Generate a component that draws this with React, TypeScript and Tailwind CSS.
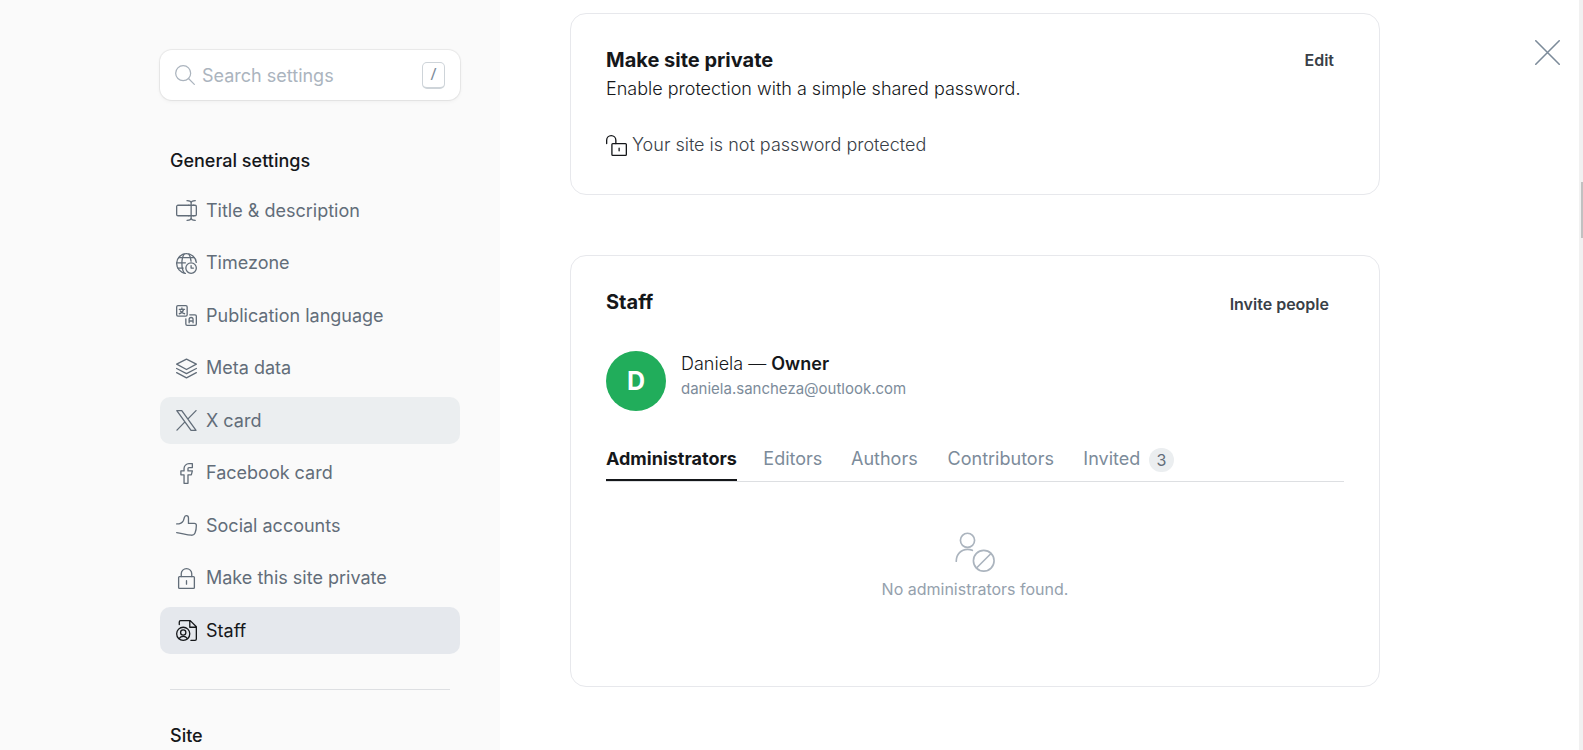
import { useState, type ReactNode } from 'react';

type IconProps = { className?: string; children: ReactNode };

function Icon({ className = 'size-[21px]', children }: IconProps) {
  return (
    <svg
      viewBox="0 0 24 24"
      fill="none"
      stroke="currentColor"
      strokeWidth="1.5"
      strokeLinecap="round"
      strokeLinejoin="round"
      aria-hidden="true"
      className={`shrink-0 ${className}`}
    >
      {children}
    </svg>
  );
}

const navItems: { label: string; icon: ReactNode }[] = [
  {
    label: 'Title & description',
    icon: (
      <>
        <path d="M14.6 18H2.25A1.5 1.5 0 0 1 .75 16.5v-9A1.5 1.5 0 0 1 2.25 6H14.6M20 6h1.75a1.5 1.5 0 0 1 1.5 1.5v9a1.5 1.5 0 0 1-1.5 1.5H20" />
        <path d="M14.6 6H20M14.6 18H20M17.3 3.6v16.8M12.6.75c2.6 0 4.7 1.3 4.7 2.9 0-1.6 2.1-2.9 4.7-2.9M12.6 23.25c2.6 0 4.7-1.3 4.7-2.9 0 1.6 2.1 2.9 4.7 2.9" />
      </>
    ),
  },
  {
    label: 'Timezone',
    icon: (
      <>
        <circle cx="17.25" cy="17.25" r="6" />
        <path d="M19.9 17.25h-2.65V14.6" />
        <path d="M10.7 23.2a11.25 11.25 0 1 1 12.48-12.5" />
        <path d="M9.4 22.9C7.9 20.8 6.75 16.7 6.75 12S7.9 3.2 9.4 1.1M.77 11.25h10M3 5.25h18M2.05 17.25H8.25M14.6 1.1c1.3 1.9 2.3 4.8 2.6 8.2" />
      </>
    ),
  },
  {
    label: 'Publication language',
    icon: (
      <>
        <rect x=".75" y=".75" width="12" height="12" rx="1.5" />
        <path d="M15.75 11.25h6a1.5 1.5 0 0 1 1.5 1.5v9a1.5 1.5 0 0 1-1.5 1.5h-9a1.5 1.5 0 0 1-1.5-1.5v-6" />
        <path d="M6.75 3.4v1.5M3.75 4.9h6M8.7 4.9c-.6 2.6-2.4 4.3-4.9 5.1M4.9 6.7c1 1.8 2.6 2.9 4.9 3.3" />
        <path d="M15 20.25V16.5a2.25 2.25 0 0 1 4.5 0v3.75M15 18.3h4.5" />
      </>
    ),
  },
  {
    label: 'Meta data',
    icon: (
      <>
        <path d="M12 1.3 23.25 7 12 13.2.75 7Z" />
        <path d="M.75 12 12 17.9 23.25 12M.75 16.7 12 22.7l11.25-6" />
      </>
    ),
  },
  {
    label: 'X card',
    icon: <path d="M10.2 13.6 1.1 23M13.7 10.1 22.9.75M17.2 23.25h5.7L6.6.75H.9Z" />,
  },
  {
    label: 'Facebook card',
    icon: (
      <path d="M18.7.75h-3.9A5.6 5.6 0 0 0 9.2 6.35V9H5.6v4.5h3.6v9.75h4.5V13.5h3.8L18.7 9h-5V6.35c0-.6.5-1.1 1.1-1.1h3.9Z" />
    ),
  },
  {
    label: 'Social accounts',
    icon: (
      <path d="M.75 10.2c3.5 0 6.2-.6 7.8-4l1-3.4c.5-1.5 1.3-2.05 2.4-2.05 1.5 0 2.3 1.25 2.3 2.65v6.2h6.7c1.5 0 2.3.9 2.3 2.3 0 3.5-.5 6.2-1.5 8.6-.8 1.9-2.1 2.75-4.2 2.6C12.2 22.7 6.5 21 .75 20.25" />
    ),
  },
  {
    label: 'Make this site private',
    icon: (
      <>
        <rect x="3" y="9.75" width="18" height="13.5" rx="1" />
        <path d="M6 9.75V6.5a6 5.75 0 0 1 12 0v3.25M12 14.5v4" />
      </>
    ),
  },
  {
    label: 'Staff',
    icon: (
      <>
        <circle cx="8.25" cy="15.75" r="7.5" />
        <circle cx="8.25" cy="14.25" r="3" />
        <path d="M3.4 21.2c2.6-3.3 7.1-3.3 9.7 0M3.75 5.25v-3a1.5 1.5 0 0 1 1.5-1.5h11L23.25 7.75v14a1.5 1.5 0 0 1-1.5 1.5H17M15.75.75v7.5h7.5" />
      </>
    ),
  },
];

const tabs: { label: string; count?: number }[] = [
  { label: 'Administrators' },
  { label: 'Editors' },
  { label: 'Authors' },
  { label: 'Contributors' },
  { label: 'Invited', count: 3 },
];

function Sidebar() {
  return (
    <aside className="flex w-[500px] shrink-0 flex-col items-end bg-[#fafafa] pt-[50px] pr-10">
      <div className="w-[300px]">
        <div className="flex h-[50px] items-center gap-[7px] rounded-xl bg-white px-[15px] shadow-[0_0_1px_1px_rgba(0,0,0,0.07),0_2px_4px_rgba(0,0,0,0.04)]">
          <label htmlFor="settings-search" aria-label="Search settings" className="text-[#abb4be]">
            <Icon className="size-5">
              <circle cx="9.8" cy="9.8" r="9" />
              <path d="m16.2 16.2 7 7" />
            </Icon>
          </label>
          <input
            id="settings-search"
            type="text"
            placeholder="Search settings"
            className="h-full min-w-0 flex-1 bg-transparent text-lg text-[#15171a] outline-none placeholder:text-[#abb4be]"
          />
          <kbd className="flex h-[27px] w-[23px] items-center justify-center rounded-[5px] border border-b-2 border-[#ced4d9] pb-[2px] font-sans text-base text-[#7c8b9a]">
            /
          </kbd>
        </div>

        <h2 className="mt-[49px] px-[10px] text-lg leading-6 font-medium text-[#15171a]">General settings</h2>
        <nav className="mt-[14px] flex min-h-[467px] flex-col justify-between">
          {navItems.map(({ label, icon }) => (
            <a
              key={label}
              href="#"
              className={`flex h-[47px] items-center gap-[9px] rounded-[10px] px-4 text-lg ${
                label === 'Staff'
                  ? 'bg-[#e5e8ed] text-[#15171a]'
                  : label === 'X card'
                    ? 'bg-[#ebeef0] text-[#626d79]'
                    : 'text-[#626d79]'
              }`}
            >
              <Icon>{icon}</Icon>
              {label}
            </a>
          ))}
        </nav>

        <hr className="mx-[10px] mt-[35px] border-[#dddfe2]" />
        <h2 className="mt-[34px] px-[10px] text-lg leading-6 font-medium text-[#15171a]">Site</h2>
      </div>
    </aside>
  );
}

function PrivateSiteCard() {
  return (
    <section className="rounded-2xl border border-[#e7e8ec] px-[35px] pt-8 pb-[35px]">
      <div className="flex items-start justify-between">
        <div>
          <h2 className="text-xl leading-7 font-bold text-[#15171a]">Make site private</h2>
          <p className="mt-px text-lg leading-7 font-light text-[#15171a]">
            Enable protection with a simple shared password.
          </p>
        </div>
        <button type="button" className="px-[10px] text-base leading-7 font-semibold text-[#394047]">
          Edit
        </button>
      </div>
      <div className="mt-7 flex items-center gap-[5px] text-lg leading-7 font-light text-[#394047]">
        <Icon className="size-[21px] text-[#15171a]">
          <rect x="6.75" y="9.75" width="16.5" height="13.5" rx="1" />
          <path d="M.75 9.75V6a5.25 5.25 0 0 1 10.5 0v3.75M15 15v3" />
        </Icon>
        Your site is not password protected
      </div>
    </section>
  );
}

function StaffCard() {
  const [active, setActive] = useState('Administrators');
  return (
    <section className="rounded-2xl border border-[#e7e8ec] px-[35px] pt-8 pb-[85px]">
      <div className="flex items-start justify-between">
        <h2 className="text-xl leading-7 font-bold text-[#15171a]">Staff</h2>
        <button type="button" className="px-[15px] pt-[2px] text-base leading-7 font-semibold text-[#394047]">
          Invite people
        </button>
      </div>

      <div className="mt-[33px] flex gap-[15px]">
        <span className="flex size-[60px] items-center justify-center rounded-full bg-[#21ad5b] pt-px text-[25px] font-bold text-white">
          D
        </span>
        <div>
          <p className="text-lg leading-[25px] font-light text-[#15171a]">
            Daniela — <strong className="font-semibold">Owner</strong>
          </p>
          <p className="text-[15px] leading-[25px] text-[#7c8b9a]">daniela.sancheza@outlook.com</p>
        </div>
      </div>

      <div role="tablist" className="mt-[34px] flex gap-[25px] border-b border-[#dddfe2]">
        {tabs.map(({ label, count }) => (
          <button
            key={label}
            type="button"
            role="tab"
            aria-selected={active === label}
            onClick={() => setActive(label)}
            className={`flex h-9 items-start gap-[7px] border-b-2 text-lg leading-7 ${
              active === label ? 'border-[#15171a] font-bold text-[#15171a]' : 'border-transparent text-[#7c8b9a]'
            }`}
          >
            {/* The hidden bold copy keeps a tab's width the same when it is selected. */}
            <span
              data-label={label}
              className="flex flex-col items-center after:invisible after:h-0 after:overflow-hidden after:font-bold after:content-[attr(data-label)]"
            >
              {label}
            </span>
            {count !== undefined && (
              <span className="mt-[3px] flex h-6 w-[25px] items-center justify-center rounded-full bg-[#ebeef0] text-base font-normal text-[#626d79]">
                {count}
              </span>
            )}
          </button>
        ))}
      </div>

      <div role="tabpanel" className="mt-[50px] flex flex-col items-center text-[#abb4be]">
        <Icon className="size-10">
          <g strokeWidth="1">
            <circle cx="7.5" cy="5" r="4.25" />
            <path d="M.75 17.5c0-4.2 3-7.1 6.75-7.1 1 0 2 .2 2.9.6" />
            <circle cx="17.25" cy="17.25" r="6.2" />
            <path d="m12.9 21.6 8.7-8.7" />
          </g>
        </Icon>
        <p className="mt-[5px] text-base text-[#95a1ad]">No administrators found.</p>
      </div>
    </section>
  );
}

export default function App() {
  return (
    <div className="flex h-screen overflow-hidden bg-white font-['Inter',sans-serif]">
      <Sidebar />
      <main className="flex min-w-0 flex-1 items-start justify-between pl-[70px]">
        <div className="flex max-w-[810px] flex-1 flex-col gap-[60px] pt-[13px]">
          <PrivateSiteCard />
          <StaffCard />
        </div>
        <button type="button" aria-label="Close" className="mt-10 mr-[19px] text-[#7c8b9a]">
          <Icon className="size-[25px]">
            <path d="m.75.75 22.5 22.5M23.25.75.75 23.25" />
          </Icon>
        </button>
      </main>
      <div aria-hidden="true" className="flex w-1 shrink-0 flex-col items-end bg-[#f1f1f1] pt-[182px]">
        <div className="h-14 w-[2px] bg-[#c1c1c1]" />
      </div>
    </div>
  );
}
